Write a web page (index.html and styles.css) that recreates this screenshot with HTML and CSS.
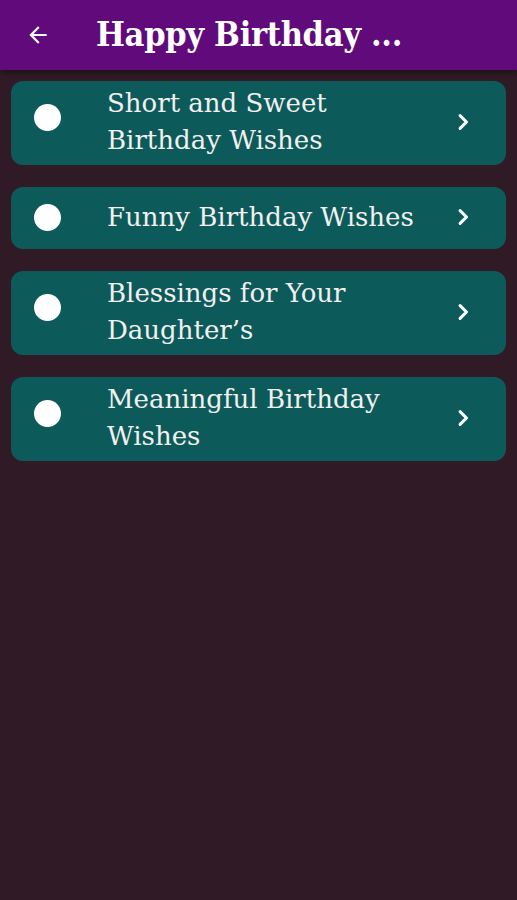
FILE: index.html
```html
<!DOCTYPE html>
<html>
<head>
<meta charset="utf-8">
<link rel="stylesheet" href="styles.css">
</head>
<body>
<header class="appbar">
  <svg class="back" width="24" height="24" viewBox="0 0 24 24"><path d="M20 11H7.83l5.59-5.59L12 4l-8 8 8 8 1.41-1.41L7.83 13H20v-2z" fill="#fff"/></svg>
  <h1 class="title">Happy Birthday ...</h1>
</header>
<main class="list">
  <div class="card two-line"><span class="dot"></span><span class="label">Short and Sweet Birthday Wishes</span><svg class="chev" width="24" height="24" viewBox="0 0 24 24"><path d="M9.5 6.5 15 12l-5.5 5.5" fill="none" stroke="#fff" stroke-width="2.6" stroke-linecap="round" stroke-linejoin="round"/></svg></div>
  <div class="card"><span class="dot"></span><span class="label">Funny Birthday Wishes</span><svg class="chev" width="24" height="24" viewBox="0 0 24 24"><path d="M9.5 6.5 15 12l-5.5 5.5" fill="none" stroke="#fff" stroke-width="2.6" stroke-linecap="round" stroke-linejoin="round"/></svg></div>
  <div class="card two-line"><span class="dot"></span><span class="label">Blessings for Your Daughter’s</span><svg class="chev" width="24" height="24" viewBox="0 0 24 24"><path d="M9.5 6.5 15 12l-5.5 5.5" fill="none" stroke="#fff" stroke-width="2.6" stroke-linecap="round" stroke-linejoin="round"/></svg></div>
  <div class="card two-line"><span class="dot"></span><span class="label">Meaningful Birthday Wishes</span><svg class="chev" width="24" height="24" viewBox="0 0 24 24"><path d="M9.5 6.5 15 12l-5.5 5.5" fill="none" stroke="#fff" stroke-width="2.6" stroke-linecap="round" stroke-linejoin="round"/></svg></div>
</main>
</body>
</html>
```
FILE: styles.css
```css
html, body {
  margin: 0;
  padding: 0;
  height: 100%;
}
body {
  background: #2f1a26;
  font-family: "DejaVu Serif", "Liberation Serif", serif;
}
.appbar {
  height: 70px;
  background: #600a7c;
  display: flex;
  align-items: center;
  box-shadow: 0 2px 6px rgba(0,0,0,0.45);
  position: relative;
}
.back {
  margin-left: 25px;
  width: 26px;
  height: 26px;
}
.title {
  margin: 0 0 0 45px;
  color: #fff;
  font-family: "DejaVu Serif Condensed", "DejaVu Serif", serif;
  font-stretch: condensed;
  font-size: 34px;
  font-weight: bold;
  line-height: 1;
  padding-bottom: 2px;
  letter-spacing: -0.3px;
}
.list {
  padding: 11px 11px;
  display: flex;
  flex-direction: column;
  gap: 22px;
}
.card {
  background: #0d5a5b;
  border-radius: 12px;
  min-height: 62px;
  padding: 4px 0 6px;
  box-sizing: border-box;
  display: flex;
  align-items: center;
}
.dot {
  width: 27px;
  height: 27px;
  border-radius: 50%;
  background: #fff;
  margin-left: 23px;
  flex: none;
}
.two-line .dot {
  margin-bottom: 10px;
}
.label {
  flex: 1;
  margin-left: 46px;
  color: #f2f0ee;
  font-size: 26px;
  line-height: 37px;
  padding-right: 20px;
}
.chev {
  flex: none;
  width: 28px;
  height: 28px;
  margin-right: 29px;
}
```
